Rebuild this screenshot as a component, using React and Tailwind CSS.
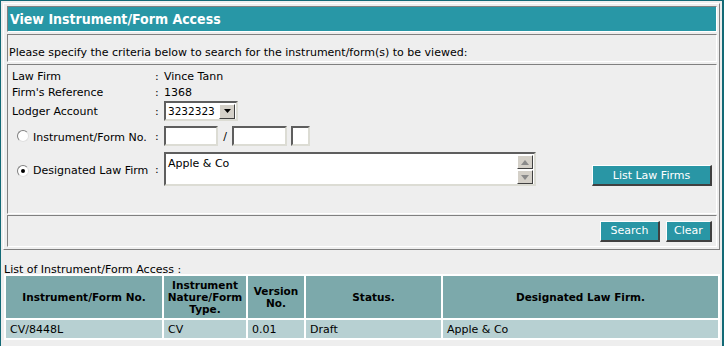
import React from 'react';

const inset = 'border border-t-[#808080] border-l-[#808080] border-b-white border-r-white';
const field = 'border-2 border-t-[#5e5e5e] border-l-[#5e5e5e] border-b-[#dcdcd4] border-r-[#dcdcd4] bg-white';
const tealBtn = 'bg-[#2996a5] text-white border border-t-white border-l-white border-b-2 border-r-2 border-b-[#404040] border-r-[#404040] text-[11px] flex items-center justify-center';

const Radio = ({ checked }) => (
  <span className="w-[12px] h-[12px] rounded-full bg-white border border-t-[#808080] border-l-[#808080] border-b-[#e0e0e0] border-r-[#e0e0e0] flex items-center justify-center shrink-0">
    {checked && <span className="w-[4px] h-[4px] rounded-full bg-black" />}
  </span>
);

const ScrollBtn = ({ up }) => (
  <div className="w-[16px] h-[15px] bg-[#d4d0c8] border border-t-white border-l-white border-b-[#404040] border-r-[#404040] flex items-center justify-center">
    <svg width="8" height="5" viewBox="0 0 8 5">
      {up ? <polygon points="0,5 8,5 4,0" fill="#8a8a8a" /> : <polygon points="0,0 8,0 4,5" fill="#8a8a8a" />}
    </svg>
  </div>
);

const Row = ({ label, children, className = '' }) => (
  <div className={`flex items-center ${className}`}>
    <div className="w-[147px] pl-[4px]">{label}</div>
    <div className="w-[9px]">:</div>
    {children}
  </div>
);

const headers = ['Instrument/Form No.', 'Instrument Nature/Form Type.', 'Version No.', 'Status.', 'Designated Law Firm.'];
const rows = [['CV/8448L', 'CV', '0.01', 'Draft', 'Apple & Co']];

export default function App() {
  return (
    <div className="w-[724px] h-[346px] overflow-hidden bg-[#eeeeee] border-t border-l border-r-2 border-[#136a76] text-black text-[11px] leading-none font-['DejaVu_Sans',sans-serif]">
      {/* criteria panel */}
      <div className="ml-[2px] mt-[2px] w-[717px] border border-t-white border-l-white border-b-[#808080] border-r-[#808080] pt-[2px] pl-[3px] pr-[2px] pb-[2px]">
        <div className={`${inset} h-[26px]`}>
          <div className="h-full bg-[#2897a6] text-white font-bold text-[14px] font-['DejaVu_Sans_Condensed','DejaVu_Sans',sans-serif] flex items-center pl-[2px]">
            View Instrument/Form Access
          </div>
        </div>

        <div className={`${inset} h-[28px] mt-[2px] flex items-end pl-[1px] pb-[3px]`}>
          Please specify the criteria below to search for the instrument/form(s) to be viewed:
        </div>

        <div className={`${inset} h-[150px] mt-[2px] pt-[3px]`}>
          <Row label="Law Firm" className="h-[16px]">
            <span>Vince Tann</span>
          </Row>
          <Row label="Firm's Reference" className="h-[16px]">
            <span>1368</span>
          </Row>
          <Row label="Lodger Account" className="h-[22px]">
            <div className={`${field} w-[74px] h-[20px] flex items-center justify-between pl-[2px] pr-[1px]`}>
              <span className="text-[10.5px]">3232323</span>
              <div className="w-[16px] h-[15px] bg-[#d4d0c8] border border-t-white border-l-white border-b-[#404040] border-r-[#404040] flex items-center justify-center shrink-0">
                <svg width="7" height="4" viewBox="0 0 7 4"><polygon points="0,0 7,0 3.5,4" fill="#000" /></svg>
              </div>
            </div>
          </Row>
          <Row
            className="h-[20px] mt-[4px]"
            label={
              <div className="flex items-center pl-[5px] gap-[4px]">
                <Radio />
                <span className="pt-[2px]">Instrument/Form No.</span>
              </div>
            }
          >
            <div className={`${field} w-[54px] h-[20px]`} />
            <span className="w-[14px] text-center">/</span>
            <div className={`${field} w-[55px] h-[20px]`} />
            <div className={`${field} w-[19px] h-[20px] ml-[4px]`} />
          </Row>
          <div className="flex items-end mt-[6px]">
            <Row
              className="h-[34px]"
              label={
                <div className="flex items-center pl-[5px] gap-[4px] pt-[3px]">
                  <Radio checked />
                  <span>Designated Law Firm</span>
                </div>
              }
            >
              <div className={`${field} w-[372px] h-[34px] flex justify-between`}>
                <span className="pl-[2px] pt-[4px]">Apple &amp; Co</span>
                <div className="flex flex-col gap-px pr-px pt-px">
                  <ScrollBtn up />
                  <ScrollBtn />
                </div>
              </div>
            </Row>
            <button className={`${tealBtn} w-[120px] h-[21px] ml-[56px]`}>List Law Firms</button>
          </div>
        </div>

        <div className={`${inset} h-[32px] mt-[1px] flex items-center justify-end gap-[6px] pr-[4px]`}>
          <button className={`${tealBtn} w-[60px] h-[21px]`}>Search</button>
          <button className={`${tealBtn} w-[46px] h-[21px]`}>Clear</button>
        </div>
      </div>

      {/* results */}
      <div className="ml-[3px] h-[24px] pt-[14px]">List of Instrument/Form Access :</div>
      <div className="ml-[3px] w-[716px] bg-white p-[2px] grid grid-cols-[156px_82px_56px_135px_1fr] gap-[2px]">
        {headers.map((h) => (
          <div key={h} className="h-[42px] bg-[#7ca9ab] font-bold text-[10.5px] leading-[12px] flex items-center justify-center text-center px-[2px]">
            {h}
          </div>
        ))}
        {rows.map((r) =>
          r.map((c, i) => (
            <div key={i} className="h-[18px] bg-[#b7d0d2] flex items-center pl-[4px]">
              {c}
            </div>
          ))
        )}
      </div>
    </div>
  );
}
